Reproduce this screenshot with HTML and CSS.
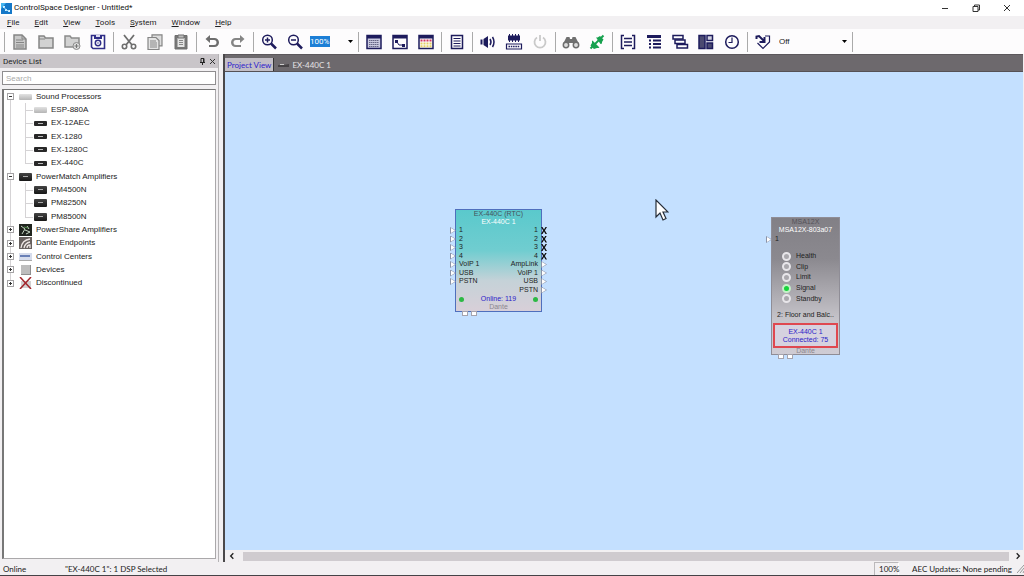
FILE: index.html
```html
<!DOCTYPE html>
<html lang="en">
<head>
<meta charset="utf-8">
<title>ControlSpace Designer - Untitled*</title>
<link rel="stylesheet" href="styles.css">
</head>
<body>
<div class="app">
  <header class="titlebar">
    <svg class="logo" viewBox="0 0 11 11"><rect width="11" height="11" fill="#1578c8"/><path d="M0 0h5L0 6z" fill="#45b4ee"/><path d="M2 3h2v2H2zM4 6h2v2H4zM7 7h2v2H7z" fill="#d8f2ff"/><path d="M3 4l2 3 3 1" stroke="#9bdcff" fill="none"/></svg>
    <h1 class="app-name">ControlSpace Designer - Untitled*</h1>
    <div class="window-buttons">
      <button class="window-button" aria-label="Minimize"><svg viewBox="0 0 8 8"><path d="M1 4.500h6"/></svg></button>
      <button class="window-button" aria-label="Restore"><svg viewBox="0 0 8 8"><path d="M1 2.500h5v5H1zM2.500 2.500v-1.500h5v5H6"/></svg></button>
      <button class="window-button" aria-label="Close"><svg viewBox="0 0 8 8"><path d="M1 1l6 6M7 1L1 7"/></svg></button>
    </div>
  </header>

  <nav class="menubar">
    <button class="menu"><u>F</u>ile</button>
    <button class="menu"><u>E</u>dit</button>
    <button class="menu"><u>V</u>iew</button>
    <button class="menu"><u>T</u>ools</button>
    <button class="menu"><u>S</u>ystem</button>
    <button class="menu"><u>W</u>indow</button>
    <button class="menu"><u>H</u>elp</button>
  </nav>

  <div class="toolbar" role="toolbar">
    <span class="sep"></span>
    <button class="tool" aria-label="New"><svg viewBox="0 0 18 16"><path d="M3 1h8l4 4v10H3z" fill="#c9c9c9" stroke="#858585" stroke-width="1.500"/><path d="M11 1v4h4M5 6h7M5 8.500h8M5 11h8M5 13h8" stroke="#858585" fill="none"/></svg></button>
    <button class="tool" aria-label="Open"><svg viewBox="0 0 18 16"><path d="M2 2h5l1.500 2H16v10H2z" fill="#d2d2d2" stroke="#858585" stroke-width="1.500"/><path d="M2 5h6" stroke="#858585"/></svg></button>
    <button class="tool" aria-label="Open recent"><svg viewBox="0 0 18 16"><path d="M2 2h5l1.500 2H16v9H2z" fill="#d2d2d2" stroke="#8b8b8b" stroke-width="1.500"/><circle cx="13.500" cy="12" r="3.500" fill="#ddd" stroke="#8b8b8b"/><path d="M13.500 10v4M11.500 12h4" stroke="#777"/></svg></button>
    <button class="tool" aria-label="Save"><svg viewBox="0 0 18 16"><path d="M2.500 1.500h13v13H4l-1.500-1.500z" fill="#fff" stroke="#302e88" stroke-width="1.600"/><path d="M5 1h8v4H5z" fill="#302e88"/><path d="M7 1h4v2H7z" fill="#dcdcf0"/><circle cx="9" cy="9" r="2.700" fill="#fff" stroke="#302e88" stroke-width="1.500"/><circle cx="9" cy="9" r=".7" fill="#302e88"/></svg></button>
    <span class="sep"></span>
    <button class="tool" aria-label="Cut"><svg viewBox="0 0 18 16"><path d="M4 1l8 10M14 1L6 11" stroke="#6e6e6e" stroke-width="1.800"/><circle cx="4.500" cy="12.500" r="2.200" fill="none" stroke="#6e6e6e" stroke-width="1.600"/><circle cx="13.500" cy="12.500" r="2.200" fill="none" stroke="#6e6e6e" stroke-width="1.600"/></svg></button>
    <button class="tool" aria-label="Copy"><svg viewBox="0 0 18 16"><path d="M6 .8h10v11H6z" fill="#ddd" stroke="#858585" stroke-width="1.200"/><path d="M2 3.500h8l3 3v9H2z" fill="#e4e4e4" stroke="#858585" stroke-width="1.200"/><path d="M4 7h6M4 9h7M4 11h7M4 13h7" stroke="#858585"/></svg></button>
    <button class="tool" aria-label="Paste"><svg viewBox="0 0 18 16"><path d="M3 1.500h12v13.500H3z" fill="#777" stroke="#6f6f6f"/><path d="M5.500 4h7v9h-7z" fill="#e4e4e4"/><path d="M6 1h6v3H6z" fill="#bbb" stroke="#6f6f6f"/><path d="M7 6.500h4M7 8.500h4M7 10.500h4" stroke="#888"/></svg></button>
    <span class="sep"></span>
    <button class="tool" aria-label="Undo"><svg viewBox="0 0 18 16"><path d="M7 1L2.500 5 7 9V6h4a2.500 2.500 0 010 5H6v2h5.500a4.500 4.500 0 000-9H7z" fill="#6e6e6e"/></svg></button>
    <button class="tool" aria-label="Redo"><svg viewBox="0 0 18 16"><path d="M11 1l4.500 4L11 9V6H7a2.500 2.500 0 000 5h5v2H6.500a4.500 4.500 0 010-9H11z" fill="#858585"/></svg></button>
    <span class="sep"></span>
    <button class="tool navy" aria-label="Zoom in"><svg viewBox="0 0 18 16"><circle cx="7.500" cy="6" r="4.800"/><path d="M11 9.500l5 5" stroke-width="2.500"/><path d="M5 6h5M7.500 3.500v5"/></svg></button>
    <button class="tool navy" aria-label="Zoom out"><svg viewBox="0 0 18 16"><circle cx="7.500" cy="6" r="4.800"/><path d="M11 9.500l5 5" stroke-width="2.500"/><path d="M5 6h5"/></svg></button>
    <label class="combo zoom-combo"><select aria-label="Zoom level" class="zoom-select"><option>100%</option></select><svg class="arrow" viewBox="0 0 5 3"><path d="M0 0h5L2.500 3z"/></svg></label>
    <span class="sep"></span>
    <button class="tool navy" aria-label="Grid window"><svg viewBox="0 0 18 16"><path d="M2 1.500h14v13H2z" fill="#c9c9df"/><path d="M2 3h14" stroke-width="3"/><path d="M4 6.500h10M4 8.500h10M4 10.500h10M4 12.500h10" stroke="#666685" stroke-width="1" stroke-dasharray="1.500 .5"/></svg></button>
    <button class="tool navy" aria-label="Signal window"><svg viewBox="0 0 18 16"><path d="M2 1.500h14v13H2z"/><path d="M2 3h14" stroke-width="3"/><path d="M4 6h3v3H4zM11 10h3v3h-3z" fill="#1d1b5c" stroke="none"/><path d="M6 8l2 3h4" stroke-width="1"/></svg></button>
    <button class="tool navy" aria-label="Parameter sets"><svg viewBox="0 0 18 16"><path d="M2 1.500h14v13H2z"/><path d="M2 3h14" stroke-width="3"/><path d="M3.500 6.500h11" stroke="#d23460" stroke-width="2" stroke-dasharray="2 1"/><path d="M3.500 9.500h11M3.500 12.300h11" stroke="#e6cf63" stroke-width="2" stroke-dasharray="2 1"/></svg></button>
    <span class="sep"></span>
    <button class="tool navy" aria-label="Notes"><svg viewBox="0 0 18 16"><path d="M3.500 1.500h11v13h-11z"/><path d="M5.500 4.500h7M5.500 7h7M5.500 9.500h7M5.500 12h7" stroke-width="1"/></svg></button>
    <span class="sep"></span>
    <button class="tool navy" aria-label="Audio"><svg viewBox="0 0 18 16"><path d="M1.500 5.500h2v5h-2zM4.500 5L9 2v12l-4.500-3z" fill="#1d1b5c" stroke="none"/><path d="M11 5q2 3 0 6M13.500 3q3 5 0 10"/></svg></button>
    <button class="tool navy" aria-label="Hardware"><svg viewBox="0 0 18 16"><path d="M3 1.500h12v5H3z" fill="#1d1b5c" stroke="none"/><path d="M4.500 0v8M7.500 0v8M10.500 0v8M13.500 0v8" stroke-width="1"/><path d="M1.500 10h15v5h-15z" stroke-width="1.200"/><path d="M3.500 12.500h11" stroke-dasharray="1.500 .8"/></svg></button>
    <button class="tool" aria-label="Power"><svg viewBox="0 0 18 16"><path d="M6 3.500a5.500 5.500 0 106 0M9 1v6" fill="none" stroke="#c9c9c9" stroke-width="1.800"/></svg></button>
    <span class="sep"></span>
    <button class="tool" aria-label="Find"><svg viewBox="0 0 18 16"><path d="M1 10L4.500 3h3l.5 2h2l.5-2h3L17 10l-5 1-1-2H7l-1 2z" fill="#707070"/><circle cx="4" cy="11" r="2.700" fill="#ddd" stroke="#6e6e6e" stroke-width="1.500"/><circle cx="14" cy="11" r="2.700" fill="#ddd" stroke="#6e6e6e" stroke-width="1.500"/></svg></button>
    <button class="tool" aria-label="Connect"><svg viewBox="0 0 18 16"><path d="M15.500 1.500l-13 13" stroke="#17a14f" stroke-width="2"/><path d="M8 3.500h1.500L12 2l3.500 3.500L14 8v1.500l-1.500.5zM4.500 6.500l7 7-1 .5H9L6 15l-3.500-3.500L4 9V7z" fill="#17a14f"/></svg></button>
    <span class="sep"></span>
    <button class="tool navy" aria-label="Group"><svg viewBox="0 0 18 16"><path d="M5 1.500H2.500v13H5M13 1.500h2.500v13H13"/><path d="M5 4.500h8M5 8h8M5 11.500h8"/></svg></button>
    <button class="tool navy" aria-label="Tree view"><svg viewBox="0 0 18 16"><path d="M2 2.500h14" stroke-width="3"/><path d="M4 6.500h2M8 6.500h8M4 10h2M8 10h8M4 13.500h2M8 13.500h8" stroke-width="2"/></svg></button>
    <button class="tool navy" aria-label="Cascade"><svg viewBox="0 0 18 16"><path d="M2 1.500h10v3.500H2z" fill="#fff"/><path d="M4 6h10v3.500H4z" fill="#fff"/><path d="M6 10.500h10.500v3.500H6z" fill="#fff"/></svg></button>
    <button class="tool navy" aria-label="Panels"><svg viewBox="0 0 18 16"><path d="M2 1.500h6v13H2z" fill="#4b4a70"/><path d="M10 1.500h5.500v5H10z" fill="#d0d0df"/><path d="M10 9h5.500v5.500H10z" fill="#4b4a70"/></svg></button>
    <button class="tool navy" aria-label="Schedule"><svg viewBox="0 0 18 16"><circle cx="9" cy="8" r="6.300"/><path d="M9 3.500V8.500H5.500" stroke-width="1.200"/></svg></button>
    <span class="sep"></span>
    <button class="tool navy" aria-label="Tag"><svg viewBox="0 0 18 16"><path d="M11 2h4.500v6L9 14.500 3.500 9" stroke-width="1.200"/><path d="M2.500 5V2.500L5 2l5 5M10.500 3v5h-5" stroke-width="2"/></svg></button>
    <label class="combo mode-combo"><select aria-label="Mode" class="mode-select"><option>Off</option></select><svg class="arrow" viewBox="0 0 5 3"><path d="M0 0h5L2.500 3z"/></svg></label>
    <span class="sep"></span>
  </div>

  <div class="workspace">
    <aside class="sidebar">
      <div class="panel-head"><h2 class="panel-title">Device List</h2>
        <button class="panel-button" aria-label="Pin"><svg viewBox="0 0 7 7"><path d="M2 .5h3v4H2zM1 4.500h5M3.500 4.500V7M4.500.5v4" fill="none" stroke="#222"/></svg></button>
        <button class="panel-button" aria-label="Close panel"><svg viewBox="0 0 7 7"><path d="M1 1l5 5M6 1L1 6" stroke="#333"/></svg></button>
      </div>
      <input class="search" type="text" placeholder="Search" aria-label="Search devices">
      <div class="tree-box">
        <ul class="tree">
          <li class="node"><button class="twist open" aria-label="Collapse"></button><span class="unit light"></span>Sound Processors</li>
          <li class="node leaf"><span class="unit light"></span>ESP-880A</li>
          <li class="node leaf"><span class="unit slim"></span>EX-12AEC</li>
          <li class="node leaf"><span class="unit slim"></span>EX-1280</li>
          <li class="node leaf"><span class="unit slim"></span>EX-1280C</li>
          <li class="node leaf last"><span class="unit slim"></span>EX-440C</li>
          <li class="node"><button class="twist open" aria-label="Collapse"></button><span class="unit"></span>PowerMatch Amplifiers</li>
          <li class="node leaf"><span class="unit"></span>PM4500N</li>
          <li class="node leaf"><span class="unit"></span>PM8250N</li>
          <li class="node leaf last"><span class="unit"></span>PM8500N</li>
          <li class="node"><button class="twist" aria-label="Expand"></button><svg class="pic" viewBox="0 0 13 12"><path d="M0 0h13v12H0z" fill="#20251f"/><path d="M2 2l4 3-3 5M6 6l5 2-4 2M8 2l2 3" stroke="#c7d6c4" fill="none"/><path d="M5 3l4 1" stroke="#4c8a45"/></svg>PowerShare Amplifiers</li>
          <li class="node"><button class="twist" aria-label="Expand"></button><svg class="pic" viewBox="0 0 13 12"><path d="M0 0h13v12H0z" fill="#68615f"/><path d="M2 11Q3 3 11 2M5 11q1-5 6-6M8 11q0-3 3-3v3" stroke="#f0e8e6" stroke-width="1.300" fill="none"/></svg>Dante Endpoints</li>
          <li class="node"><button class="twist" aria-label="Expand"></button><svg class="pic" viewBox="0 0 13 12"><path d="M0 2h13v8H0z" fill="#d6dcec"/><path d="M1 5h10" stroke="#4561a5" stroke-width="1.500"/><path d="M0 9.500h13" stroke="#aaa"/></svg>Control Centers</li>
          <li class="node"><button class="twist" aria-label="Expand"></button><svg class="pic" viewBox="0 0 13 12"><path d="M2 1h10v10H2z" fill="#bdbdbd"/><path d="M2 10.500h10M11.500 1v10" stroke="#8f8f8f"/></svg>Devices</li>
          <li class="node"><button class="twist" aria-label="Expand"></button><svg class="pic" viewBox="0 0 13 12"><path d="M2 4h10v7H2z" fill="#d2d0d0"/><path d="M1 0l11 12M12 0L1 12" stroke="#a3262c" stroke-width="1.500"/></svg>Discontinued</li>
        </ul>
      </div>
    </aside>

    <main class="project">
      <div class="tabs" role="tablist">
        <button class="tab active" role="tab" aria-selected="true">Project View</button>
        <button class="tab" role="tab" aria-selected="false"><svg class="tab-icon" viewBox="0 0 11 5"><path d="M0 2h6l5-1v3H0z" fill="#464346"/><path d="M2 1.500h4" stroke="#ccc"/></svg>EX-440C 1</button>
      </div>
      <div class="canvas">
        <section class="device processor">
          <div class="device-type">EX-440C (RTC)</div>
          <div class="device-name">EX-440C 1</div>
          <div class="ports">
            <ul class="port-list inputs">
              <li class="port">1</li><li class="port">2</li><li class="port">3</li><li class="port">4</li><li class="port">VoIP 1</li><li class="port">USB</li><li class="port">PSTN</li>
            </ul>
            <ul class="port-list outputs">
              <li class="port cut">1</li><li class="port cut">2</li><li class="port cut">3</li><li class="port cut">4</li><li class="port">AmpLink</li><li class="port">VoIP 1</li><li class="port">USB</li><li class="port">PSTN</li>
            </ul>
          </div>
          <div class="online"><span class="dot"></span>Online: 119<span class="dot"></span></div>
          <div class="network">Dante</div>
          <div class="jacks"><span class="jack"></span><span class="jack"></span></div>
        </section>

        <section class="device array">
          <div class="device-type">MSA12X</div>
          <div class="device-name">MSA12X-803a07</div>
          <ul class="port-list inputs"><li class="port">1</li></ul>
          <ul class="leds">
            <li class="led">Health</li><li class="led">Clip</li><li class="led">Limit</li><li class="led on">Signal</li><li class="led">Standby</li>
          </ul>
          <div class="preset">2: Floor and Balc..</div>
          <div class="link">EX-440C 1<br>Connected: 75</div>
          <div class="network">Dante</div>
          <div class="jacks"><span class="jack"></span><span class="jack"></span></div>
        </section>

        <svg class="cursor" viewBox="0 0 14 22"><path d="M1 1v17l4-4 3 7 3-1.500-3-6.500h5z" fill="#fff" stroke="#252d38" stroke-width="1.200"/></svg>
      </div>
      <div class="scrollbar">
        <button class="scroll-button" aria-label="Scroll left"><svg viewBox="0 0 6 6"><path d="M4 1L2 3l2 2"/></svg></button>
        <div class="thumb"></div>
        <button class="scroll-button" aria-label="Scroll right"><svg viewBox="0 0 6 6"><path d="M2 1l2 2-2 2"/></svg></button>
      </div>
    </main>
  </div>

  <footer class="statusbar">
    <span class="state">Online</span>
    <span class="selection">"EX-440C 1": 1 DSP Selected</span>
    <span class="zoom-state">100%</span>
    <span class="updates">AEC Updates: None pending</span>
    <svg class="grip" viewBox="0 0 7 8"><path d="M0 8l7-8M3 8l4-5M6 8l1-2" stroke="#999"/></svg>
  </footer>
</div>
</body>
</html>
```
FILE: styles.css
```css
*, *::before, *::after { box-sizing: border-box; }
body { margin: 0; font: 8px/12px Roboto, "Noto Sans", sans-serif; color: #222; }
button, input, select { font: inherit; color: inherit; margin: 0; padding: 0; border: 0; background: none; }
button { display: flex; align-items: center; justify-content: center; }
ul { list-style: none; margin: 0; padding: 0; }
h1, h2 { margin: 0; font-size: inherit; font-weight: normal; }
svg { flex: none; }

.app { display: flex; flex-direction: column; height: 100vh; background: #f2f0f2; border-bottom: 1px solid #454347; overflow: hidden; }

.titlebar { display: flex; align-items: center; height: 16px; padding-left: 1px; background: #fff; }
.logo { width: 11px; height: 11px; margin-right: 2px; }
.app-name { flex: 1; color: #111; }
.window-buttons { display: flex; }
.window-button { width: 31px; height: 16px; }
.window-button svg { width: 8px; height: 8px; fill: none; stroke: #333; }
.window-button:last-child { margin-right: 2px; }

.menubar { display: flex; gap: 15px; height: 13px; padding-left: 7px; }
.menu { display: block; }

.toolbar { display: flex; align-items: center; height: 25px; padding-left: 2px; background: #fdfcfd; }
.tool { width: 26px; height: 24px; }
.tool svg { width: 18px; height: 16px; }
.navy svg { fill: none; stroke: #1d1b5c; stroke-width: 1.5px; }
.sep { width: 5px; height: 20px; background: linear-gradient(#aaa, #aaa) center / 1px 100% no-repeat; }
.combo { display: flex; align-items: center; justify-content: space-between; padding: 0 3px 0 2px; }
.combo select { appearance: none; height: 11px; line-height: 11px; }
.zoom-combo { width: 48px; }
.zoom-select { width: 20px; background: #1c7fd6; color: #fff; }
.mode-combo { width: 74px; padding-left: 3px; }
.mode-select { font-family: "Liberation Sans", Arial, sans-serif; }
.arrow { width: 5px; height: 3px; }

.workspace { display: flex; flex: 1; min-height: 0; }
.sidebar { display: flex; flex-direction: column; width: 219px; padding-right: 2px; padding-bottom: 3px; border-right: 1px solid #b5b3b5; font-family: "Liberation Sans", Arial, sans-serif; }
.panel-head { display: flex; align-items: center; gap: 3px; height: 14px; margin-right: -2px; padding: 1px 2px 0 3px; background: #c9c5c9; font-family: Roboto, "Noto Sans", sans-serif; }
.panel-title { flex: 1; }
.panel-button svg { width: 7px; height: 7px; }
.search { height: 14px; margin: 3px 0 4px 2px; padding: 0 3px; border: 1px solid #8f8d8f; background: #fff; }
.search::placeholder { color: #aaa; opacity: 1; }
.tree-box { flex: 1; margin-left: 2px; border: 1px solid #aaa8aa; border-top-color: #777; border-left: 2px solid #777; background: #fff; }
.tree { display: grid; grid-auto-rows: 1fr; height: 200px; }
.node { position: relative; display: flex; align-items: center; gap: 4px; padding-left: 15px; }
.node::before { content: ""; position: absolute; left: 6px; top: 0; bottom: 0; border-left: 1px solid #d5d3d5; }
.node:first-child::before { top: 50%; }
.node:last-child::before { bottom: 50%; }
.leaf { padding-left: 30px; }
.leaf::after { content: ""; position: absolute; left: 21px; top: 50%; width: 8px; border-top: 1px solid #d5d3d5; }
.leaf .unit::before { content: ""; position: absolute; left: 21px; top: 0; bottom: 0; border-left: 1px solid #d5d3d5; }
.last .unit::before { bottom: 50%; }
.twist { position: absolute; left: 3px; width: 7px; height: 7px; border: 1px solid #a5a3a5; background: linear-gradient(#333, #333) center / 3px 1px no-repeat, linear-gradient(#333, #333) center / 1px 3px no-repeat, #fff; }
.twist.open { background: linear-gradient(#333, #333) center / 3px 1px no-repeat, #fff; }
.unit { width: 13px; height: 8px; border-radius: 1px; background: linear-gradient(#aaa, #aaa) 4px 3px / 5px 1px no-repeat, linear-gradient(#444, #171717); }
.slim { height: 5px; background: linear-gradient(#bbb, #bbb) 4px 2px / 5px 1px no-repeat, #282828; }
.light { height: 6px; background: linear-gradient(#e2e2e2, #b5b5b5); }
.pic { width: 13px; height: 12px; }

.project { display: flex; flex: 1; flex-direction: column; min-width: 0; margin-left: 4px; border-left: 2px solid #4a484a; }
.tabs { display: flex; align-items: flex-end; height: 18px; margin-right: 1px; background: #6d696d; border-bottom: 1px solid #555155; border-top: 1px solid #5c585c; }
.tab { gap: 3px; height: 13px; padding: 1px 4px 0; color: #e5e3e5; font-family: Lato, "Noto Sans", sans-serif; }
.tab.active { padding: 1px 2px 0; border-right: 1px solid #333; background: #c2bec6; color: #2e22cc; }
.tab-icon { width: 11px; height: 5px; }
.canvas { position: relative; flex: 1; margin-right: 1px; background: #c4e0ff; overflow: hidden; }
.scrollbar { display: flex; align-items: center; height: 12px; }
.scroll-button { width: 13px; height: 12px; }
.scroll-button svg { width: 8px; height: 8px; fill: none; stroke: #222; }
.thumb { flex: 1; height: 9px; margin: 0 2px 0 5px; background: #cfcbcf; }

.device { position: absolute; display: flex; flex-direction: column; text-align: center; font: 7px/8px "Liberation Sans", Arial, sans-serif; color: #222; }
.device-type { color: #44525a; }
.device-name { color: #fff; }
.processor { left: 230px; top: 137px; width: 87px; height: 103px; border: 1px solid #4f6fbd; background: linear-gradient(#5ac9cc, #70cdd0 40%, #c5d2d8 70%, #d8cfd8); }
.ports { display: flex; justify-content: space-between; height: 68px; }
.port-list { display: grid; grid-template-rows: repeat(8, 1fr); }
.inputs { text-align: left; }
.outputs { text-align: right; }
.port { position: relative; padding: 0 3px; }
.port::before { content: ""; position: absolute; top: 1px; width: 6px; height: 7px; background: #8b93a8; clip-path: polygon(0 0, 100% 50%, 0 100%); }
.port::after { content: ""; position: absolute; top: 2px; width: 4px; height: 5px; background: #fff; clip-path: polygon(0 0, 100% 50%, 0 100%); }
.inputs .port::before { left: -6px; }
.inputs .port::after { left: -5px; }
.outputs .port::before { right: -6px; }
.outputs .port::after { right: -5px; }
.outputs .cut::before { background: #111; clip-path: polygon(0 0, 25% 0, 50% 35%, 75% 0, 100% 0, 65% 50%, 100% 100%, 75% 100%, 50% 65%, 25% 100%, 0 100%, 35% 50%); }
.outputs .cut::after { display: none; }
.online { display: flex; align-items: center; justify-content: space-between; margin-top: 1px; padding: 0 3px; color: #2c22c8; }
.dot { width: 5px; height: 5px; border-radius: 50%; background: #2cb944; }
.network { color: #8b878f; }
.jacks { position: absolute; left: 6px; top: 100%; display: flex; gap: 3px; }
.jack { width: 6px; height: 5px; border: 1px solid #a5a3ad; background: #fff; }

.array { left: 546px; top: 145px; width: 69px; height: 138px; border: 1px solid #8f8d96; background: linear-gradient(#828086, #8b898f 30%, #c6c4ca 75%, #cfccd4); }
.array .device-type { color: #55535a; }
.array .port-list { height: 9px; margin-top: 1px; grid-template-rows: 1fr; }
.leds { display: grid; grid-auto-rows: 1fr; height: 53px; margin-top: 7px; padding-left: 10px; }
.led { display: flex; align-items: center; gap: 5px; }
.led::before { content: ""; width: 9px; height: 9px; border: 2px solid #e8e6ea; border-radius: 50%; background: #aaa8ad; }
.led.on::before { background: #18d43c; border-color: #c5f0c8; }
.preset { margin-top: 7px; white-space: nowrap; }
.link { margin: 4px 1px 0; padding: 3px 0 2px; border: 2px solid #df4850; background: #d6d2df; color: #2c22c8; }
.array .network { line-height: 6px; }
.cursor { position: absolute; left: 430px; top: 127px; width: 14px; height: 22px; }

.statusbar { display: flex; align-items: center; height: 13px; padding: 1px 0 0 3px; font-family: Lato, "Noto Sans", sans-serif; }
.state { width: 62px; }
.selection { flex: 1; }
.zoom-state { width: 25px; padding-left: 4px; border: 1px solid #bbb9bb; border-right-color: #fff; }
.updates { margin: 0 5px 0 13px; }
.grip { width: 7px; height: 8px; }
```
